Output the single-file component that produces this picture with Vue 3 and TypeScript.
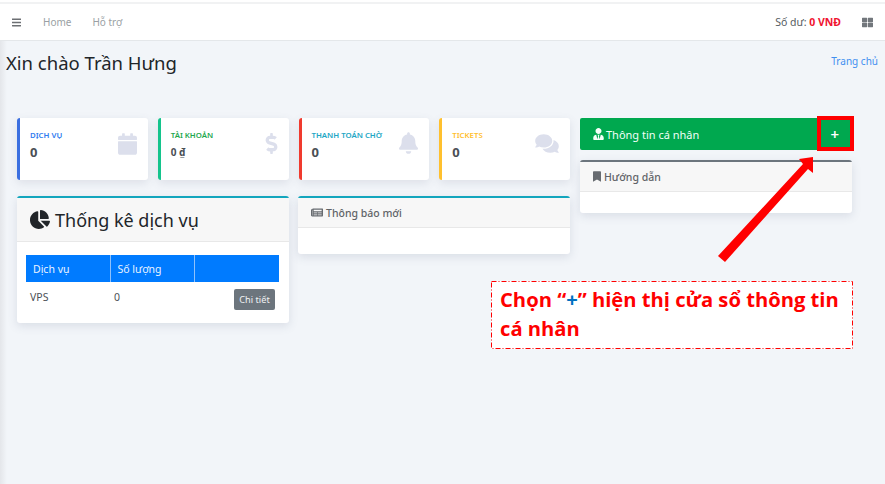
<script setup lang="ts">
interface Stat {
  label: string
  value: string
  accent: string
  labelColor: string
  viewBox: string
  icon: string
  iconClass: string
}

const stats: Stat[] = [
  {
    label: 'DỊCH VỤ', value: '0', accent: '#3b6fe0', labelColor: '#2f7cf0', viewBox: '0 0 448 512', iconClass: 'i-cal',
    icon: 'M12 192h424c6.6 0 12 5.4 12 12v260c0 26.5-21.5 48-48 48H48c-26.5 0-48-21.5-48-48V204c0-6.6 5.4-12 12-12zm436-44v-36c0-26.5-21.5-48-48-48h-48V12c0-6.6-5.4-12-12-12h-40c-6.6 0-12 5.4-12 12v52H160V12c0-6.6-5.4-12-12-12h-40c-6.6 0-12 5.4-12 12v52H48C21.5 64 0 85.5 0 112v36c0 6.6 5.4 12 12 12h424c6.6 0 12-5.4 12-12z',
  },
  {
    label: 'TÀI KHOẢN', value: '0 ₫', accent: '#14c48c', labelColor: '#1fa84f', viewBox: '0 0 288 512', iconClass: 'i-dollar',
    icon: 'M209.2 233.4l-108-31.6C88.7 198.2 80 186.5 80 173.5c0-16.3 13.2-29.5 29.5-29.5h66.3c12.2 0 24.2 3.7 34.2 10.5 6.1 4.1 14.3 3.1 19.5-2l34.8-34c7.1-6.9 6.1-18.4-1.8-24.5C238 74.8 207.4 64.1 176 64V16c0-8.8-7.2-16-16-16h-32c-8.8 0-16 7.2-16 16v48h-2.5C45.8 64-5.4 118.7.5 183.6c4.2 46.1 39.4 83.6 83.8 96.6l102.5 30c12.5 3.7 21.2 15.3 21.2 28.3 0 16.3-13.2 29.5-29.5 29.5h-66.3C100 368 88 364.3 78 357.5c-6.1-4.1-14.3-3.1-19.5 2l-34.8 34c-7.1 6.9-6.1 18.4 1.8 24.5 24.5 19.2 55.1 29.9 86.5 30v48c0 8.8 7.2 16 16 16h32c8.8 0 16-7.2 16-16v-48.2c46.6-.9 90.3-28.6 105.7-72.7 21.5-61.6-14.6-124.8-72.5-141.7z',
  },
  {
    label: 'THANH TOÁN CHỜ', value: '0', accent: '#f03a2e', labelColor: '#1ea7c5', viewBox: '0 0 448 512', iconClass: 'i-bell',
    icon: 'M224 512c35.32 0 63.97-28.65 63.97-64H160.03c0 35.35 28.65 64 63.97 64zm215.39-149.71c-19.32-20.76-55.47-51.99-55.47-154.29 0-77.7-54.48-139.9-127.94-155.16V32c0-17.67-14.32-32-31.98-32s-31.98 14.33-31.98 32v20.84C118.56 68.1 64.08 130.3 64.08 208c0 102.3-36.15 133.53-55.47 154.29-6 6.45-8.66 14.16-8.61 21.71.11 16.4 12.98 32 32.1 32h383.8c19.12 0 32-15.6 32.1-32 .05-7.55-2.61-15.27-8.61-21.71z',
  },
  {
    label: 'TICKETS', value: '0', accent: '#ffc02e', labelColor: '#ffc02e', viewBox: '0 0 576 512', iconClass: 'i-comments',
    icon: 'M416 192c0-88.4-93.1-160-208-160S0 103.6 0 192c0 34.3 14.1 65.9 38 92-13.4 30.2-35.5 54.2-35.8 54.5-2.2 2.3-2.8 5.7-1.5 8.7S4.8 352 8 352c36.6 0 66.9-12.3 88.7-25 32.2 15.7 70.3 25 111.3 25 114.9 0 208-71.6 208-160zm122 220c23.9-26 38-57.7 38-92 0-66.9-53.5-124.2-129.3-148.1.9 6.6 1.3 13.3 1.3 20.1 0 105.9-107.7 192-240 192-10.8 0-21.3-.8-31.7-1.9C207.8 439.6 281.8 480 368 480c41 0 79.1-9.2 111.3-25 21.8 12.7 52.1 25 88.7 25 3.2 0 6.1-1.9 7.3-4.8 1.3-2.9.7-6.3-1.5-8.7-.3-.3-22.4-24.2-35.8-54.5z',
  },
]
</script>

<template>
  <div class="page">
    <nav class="navbar">
      <svg class="bars" viewBox="0 0 448 512"><path d="M16 132h416c8.837 0 16-7.163 16-16V76c0-8.837-7.163-16-16-16H16C7.163 60 0 67.163 0 76v40c0 8.837 7.163 16 16 16zm0 160h416c8.837 0 16-7.163 16-16v-40c0-8.837-7.163-16-16-16H16c-8.837 0-16 7.163-16 16v40c0 8.837 7.163 16 16 16zm0 160h416c8.837 0 16-7.163 16-16v-40c0-8.837-7.163-16-16-16H16c-8.837 0-16 7.163-16 16v40c0 8.837 7.163 16 16 16z"/></svg>
      <a class="nav-link">Home</a>
      <a class="nav-link">Hỗ trợ</a>
      <span class="balance">Số dư: <b>0 VNĐ</b></span>
      <svg class="grid-icon" viewBox="0 0 512 512"><path d="M296 32h192c13.255 0 24 10.745 24 24v160c0 13.255-10.745 24-24 24H296c-13.255 0-24-10.745-24-24V56c0-13.255 10.745-24 24-24zm-80 0H24C10.745 32 0 42.745 0 56v160c0 13.255 10.745 24 24 24h192c13.255 0 24-10.745 24-24V56c0-13.255-10.745-24-24-24zM0 296v160c0 13.255 10.745 24 24 24h192c13.255 0 24-10.745 24-24V296c0-13.255-10.745-24-24-24H24c-13.255 0-24 10.745-24 24zm296 184h192c13.255 0 24-10.745 24-24V296c0-13.255-10.745-24-24-24H296c-13.255 0-24 10.745-24 24v160c0 13.255 10.745 24 24 24z"/></svg>
    </nav>

    <header class="title-row">
      <h1>Xin chào Trần Hưng</h1>
      <a class="crumb">Trang chủ</a>
    </header>

    <main class="content">
      <div class="left">
        <div class="stats">
          <div v-for="s in stats" :key="s.label" class="stat" :style="{ borderLeftColor: s.accent }">
            <div class="stat-text">
              <div class="stat-label" :style="{ color: s.labelColor }">{{ s.label }}</div>
              <div class="stat-value" :class="{ small: s.value.length > 1 }">{{ s.value }}</div>
            </div>
            <svg class="stat-icon" :class="s.iconClass" :viewBox="s.viewBox"><path :d="s.icon" /></svg>
          </div>
        </div>

        <div class="panels">
          <section class="card teal">
            <div class="card-head big">
              <svg class="pie" viewBox="0 0 544 512"><path d="M527.79 288H290.5l158.03 158.03c6.04 6.04 15.98 6.53 22.19.68 38.7-36.46 65.32-85.61 73.13-140.86 1.34-9.46-6.51-17.85-16.06-17.85zm-15.83-64.8C503.72 103.74 408.26 8.28 288.8.04 279.68-.59 272 7.1 272 16.24V240h223.77c9.14 0 16.82-7.68 16.19-16.8zM224 288V50.71c0-9.55-8.39-17.4-17.84-16.06C86.99 51.49-4.1 155.6.14 280.37 4.5 408.51 114.83 513.59 243.03 511.98c50.4-.63 96.97-16.87 135.26-44.03 7.9-5.6 8.42-17.23 1.57-24.08L224 288z"/></svg>
              <span>Thống kê dịch vụ</span>
            </div>
            <div class="table-wrap">
              <table>
                <thead>
                  <tr><th>Dịch vụ</th><th>Số lượng</th><th></th></tr>
                </thead>
                <tbody>
                  <tr>
                    <td>VPS</td>
                    <td>0</td>
                    <td class="action"><button type="button">Chi tiết</button></td>
                  </tr>
                </tbody>
              </table>
            </div>
          </section>

          <section class="card teal">
            <div class="card-head">
              <svg class="head-icon news" viewBox="0 0 576 512"><path d="M552 64H88c-13.255 0-24 10.745-24 24v8H24c-13.255 0-24 10.745-24 24v272c0 30.928 25.072 56 56 56h472c26.51 0 48-21.49 48-48V88c0-13.255-10.745-24-24-24zM56 400a8 8 0 0 1-8-8V144h16v248a8 8 0 0 1-8 8zm236-16H140c-6.627 0-12-5.373-12-12v-8c0-6.627 5.373-12 12-12h152c6.627 0 12 5.373 12 12v8c0 6.627-5.373 12-12 12zm208 0H348c-6.627 0-12-5.373-12-12v-8c0-6.627 5.373-12 12-12h152c6.627 0 12 5.373 12 12v8c0 6.627-5.373 12-12 12zm-208-96H140c-6.627 0-12-5.373-12-12v-8c0-6.627 5.373-12 12-12h152c6.627 0 12 5.373 12 12v8c0 6.627-5.373 12-12 12zm208 0H348c-6.627 0-12-5.373-12-12v-8c0-6.627 5.373-12 12-12h152c6.627 0 12 5.373 12 12v8c0 6.627-5.373 12-12 12zm0-96H140c-6.627 0-12-5.373-12-12v-40c0-6.627 5.373-12 12-12h360c6.627 0 12 5.373 12 12v40c0 6.627-5.373 12-12 12z"/></svg>
              <span>Thông báo mới</span>
            </div>
            <div class="card-empty"></div>
          </section>
        </div>
      </div>

      <aside class="right">
        <div class="profile">
          <svg class="profile-icon" viewBox="0 0 448 512"><path d="M224 256c70.7 0 128-57.3 128-128S294.7 0 224 0 96 57.3 96 128s57.3 128 128 128zm95.8 32.6L272 480l-32-136 32-56h-96l32 56-32 136-47.8-191.4C56.9 292 0 350.3 0 422.4V464c0 26.5 21.5 48 48 48h352c26.5 0 48-21.5 48-48v-41.6c0-72.1-56.9-130.4-128.2-133.8z"/></svg>
          <span class="profile-title">Thông tin cá nhân</span>
          <span class="plus">+</span>
        </div>
        <section class="card slate">
          <div class="card-head">
            <svg class="head-icon mark" viewBox="0 0 384 512"><path d="M0 512V48C0 21.49 21.49 0 48 0h288c26.51 0 48 21.49 48 48v464L192 400 0 512z"/></svg>
            <span>Hướng dẫn</span>
          </div>
          <div class="card-empty low"></div>
        </section>
      </aside>
    </main>

    <div class="red-box"></div>
    <svg class="arrow" viewBox="0 0 885 484" aria-hidden="true">
      <polygon points="718,256 725,262 808,169 813,173 813,157 799,159 803,164" fill="#ff0000" />
    </svg>
    <div class="callout">
      <svg class="callout-border" viewBox="0 0 362 68" aria-hidden="true">
        <rect x="0.5" y="0.5" width="361" height="67" fill="none" stroke="#ff0000" stroke-width="1" stroke-dasharray="5 2 1 2" />
      </svg>
      <p>Chọn “<span class="blue">+</span>” hiện thị cửa sổ thông tin cá nhân</p>
    </div>
  </div>
</template>

<style scoped>
.page {
  position: relative;
  width: 885px;
  height: 484px;
  overflow: hidden;
  padding-top: 4px;
  box-sizing: border-box;
  background:
    linear-gradient(to bottom, #fff 0 2px, #f1f2f3 2px 4px, transparent 4px),
    linear-gradient(to right, #e4e6ea 0, #f2f5f9 7px);
  font-family: "Noto Sans", "Open Sans", sans-serif;
  color: #343a40;
}
.navbar {
  display: flex;
  align-items: center;
  height: 37px;
  box-sizing: border-box;
  padding: 0 12px;
  background: #fff;
  border-bottom: 1px solid #e4e7ea;
  font-size: 10px;
}
.bars { width: 9px; height: 11px; fill: #6c6f73; }
.nav-link { color: #9a9fa4; margin-left: 22px; }
.nav-link + .nav-link { margin-left: 21px; }
.balance { margin-left: auto; color: #555b61; font-size: 10.5px; }
.balance b { color: #f0142f; font-weight: 700; }
.grid-icon { width: 11px; height: 11px; margin-left: 21px; fill: #72777c; }

.title-row {
  display: flex;
  justify-content: space-between;
  padding: 7px 7px 0 6px;
  height: 77px;
  box-sizing: border-box;
}
h1 {
  margin: 0;
  font-size: 18.5px;
  font-weight: 400;
  line-height: 30px;
  color: #212529;
}
.crumb { color: #3f8ff0; font-size: 10px; line-height: 26px; }

.content {
  display: flex;
  align-items: flex-start;
  gap: 10px;
  padding-left: 17px;
}
.left { width: 553px; }
.right { width: 272px; display: flex; flex-direction: column; gap: 10px; }
.right .card { flex: none; }

.stats { display: flex; gap: 10px; }
.stat {
  flex: 1;
  height: 62px;
  box-sizing: border-box;
  display: flex;
  justify-content: space-between;
  padding: 11px 11px 0 10px;
  background: #fff;
  border-left: 3px solid;
  border-radius: 3px;
  box-shadow: 0 3px 10px rgba(90, 100, 130, 0.14);
}
.stat-label { font-size: 7.8px; font-weight: 600; line-height: 12px; white-space: nowrap; }
.stat-value { font-size: 13px; font-weight: 700; line-height: 20px; margin-top: 1px; color: #4a4f55; }
.stat-value.small { font-size: 10px; }
.stat-icon { fill: #dcdfec; flex: none; }
.i-cal { width: 19px; height: 22px; margin-top: 4px; }
.i-dollar { width: 13px; height: 21px; margin-top: 4px; }
.i-bell { width: 19px; height: 22px; margin-top: 3px; }
.i-comments { width: 24px; height: 21px; margin-top: 4px; }

.panels { display: flex; gap: 9px; align-items: flex-start; margin-top: 16px; }
.card {
  background: #fff;
  border-radius: 3px;
  border-top: 2px solid;
  box-shadow: 0 3px 10px rgba(90, 100, 130, 0.16);
  flex: 1;
  min-width: 0;
}
.teal { border-top-color: #12a5bd; }
.slate { border-top-color: #6c757d; }
.card-head {
  display: flex;
  align-items: center;
  gap: 3px;
  height: 29px;
  padding-left: 13px;
  background: #f7f7f7;
  border-bottom: 1px solid #e8e8e8;
  font-size: 10.5px;
  font-weight: 500;
  color: #5f6367;
}
.card-head.big {
  height: 43px;
  padding-left: 13px;
  gap: 5px;
  font-size: 18px;
  font-weight: 400;
  color: #212529;
}
.pie { width: 20px; height: 19px; fill: #212529; }
.head-icon { fill: #676b70; }
.news { width: 12px; height: 11px; }
.mark { width: 8px; height: 11px; }
.card-empty { height: 26px; }
.card-empty.low { height: 21px; }

.table-wrap { padding: 13px 10px 13px 9px; }
table {
  width: 100%;
  border-collapse: collapse;
  table-layout: fixed;
  font-size: 10.5px;
}
th {
  box-sizing: border-box;
  height: 27px;
  padding: 0 7px;
  background: #007bff;
  color: #eaf3ff;
  font-weight: 400;
  text-align: left;
  border-left: 1px solid #8fc1fb;
}
th:first-child { border-left: 0; width: 84px; }
th:nth-child(2) { width: 84px; }
td { padding: 8px 4px 0; color: #4b5056; vertical-align: top; }
.action { padding: 7px 4px 0 0; }
button {
  display: block;
  margin-left: auto;
  height: 21px;
  width: 41px;
  padding: 0;
  border: 0;
  border-radius: 2px;
  background: #6c757d;
  color: #f1f2f3;
  font: 9.2px "Noto Sans", "Open Sans", sans-serif;
}

.profile {
  display: flex;
  align-items: center;
  height: 32px;
  padding-left: 13px;
  box-sizing: border-box;
  background: #00a84f;
  border-radius: 2px;
  color: #f2fff7;
  font-size: 11px;
}
.profile-icon { width: 11px; height: 12px; fill: #f4fff9; margin-right: 2px; }
.plus {
  margin-left: auto;
  margin-right: 13px;
  font-size: 15px;
  font-weight: 600;
  color: #fff;
  line-height: 32px;
}

.red-box {
  position: absolute;
  left: 817px;
  top: 116px;
  width: 37px;
  height: 35px;
  box-sizing: border-box;
  border: 4px solid #f00;
}
.arrow {
  position: absolute;
  left: 0;
  top: 0;
  width: 885px;
  height: 484px;
  pointer-events: none;
}
.callout {
  position: absolute;
  left: 491px;
  top: 281px;
  width: 362px;
  height: 68px;
  box-sizing: border-box;
  padding: 4px 9px;
  background: #fff;
}
.callout-border { position: absolute; inset: 0; width: 362px; height: 68px; }
.callout p {
  position: relative;
  margin: 0;
  font-family: "Open Sans", "Noto Sans", sans-serif;
  font-size: 20.2px;
  font-weight: 700;
  line-height: 29px;
  color: #f00;
}
.blue { color: #0070c0; }
</style>

<style>
body { margin: 0; }
</style>
